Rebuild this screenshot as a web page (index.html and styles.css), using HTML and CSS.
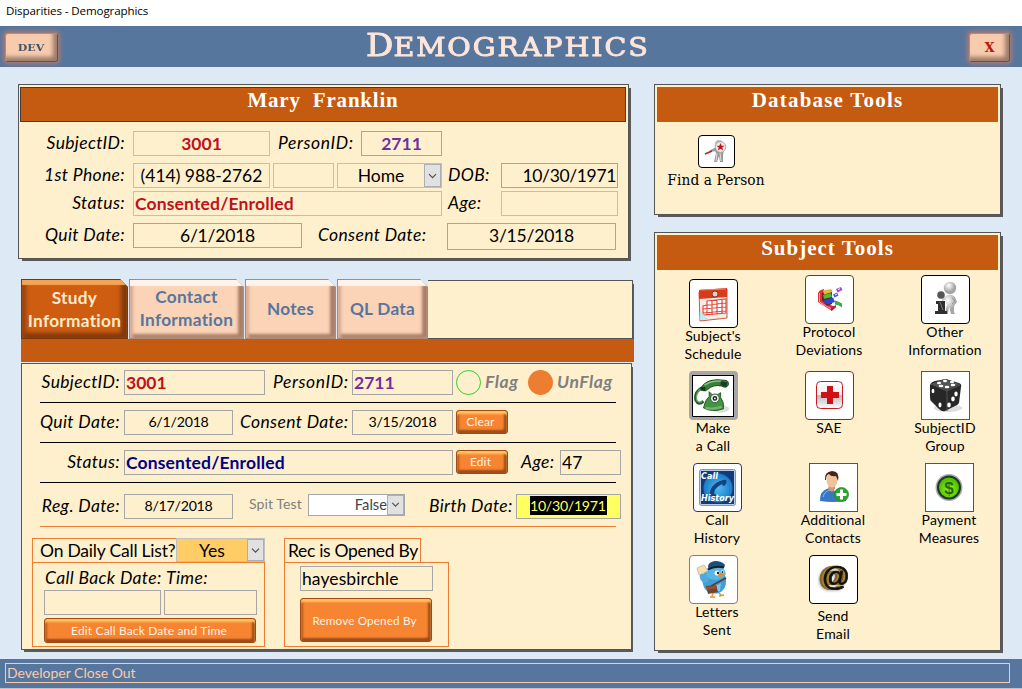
FILE: index.html
```html
<!DOCTYPE html>
<html lang="en">
<head>
<meta charset="utf-8">
<title>Disparities - Demographics</title>
<link rel="stylesheet" href="styles.css">
</head>
<body>
<div class="titlebar">Disparities - Demographics</div>
<header class="header">
  <button class="glow dev"><span>DEV</span></button>
  <h1>D<span>EMOGRAPHICS</span></h1>
  <button class="glow close">X</button>
</header>
<main class="main">
  <div class="left">
    <section class="panel person">
      <h2 class="bar outlined">Mary&nbsp; Franklin</h2>
      <div class="row r1"><label class="first">SubjectID:</label><div class="field w137 red c">3001</div><label class="pid">PersonID:</label><div class="field w81 purple c">2711</div></div>
      <div class="row r2"><label class="first">1st Phone:</label><div class="field w137 c phone">(414) 988-2762</div><div class="field w61"></div><div class="field w105 combo"><span>Home</span><i class="drop"><svg viewBox="0 0 17 22"><path d="M4.500 9.500l4 4 4-4"/></svg></i></div><label class="dob">DOB:</label><div class="field w117 right">10/30/1971</div></div>
      <div class="row r3"><label class="first">Status:</label><div class="field w309 red status">Consented/Enrolled</div><label class="dob">Age:</label><div class="field w117"></div></div>
      <div class="row r4"><label class="first">Quit Date:</label><div class="field w169 c dark">6/1/2018</div><label class="cons">Consent Date:</label><div class="field w169 c dark tall">3/15/2018</div></div>
    </section>
    <nav class="tabs">
      <div class="tab active t1">Study<br>Information</div><div class="tab t2">Contact<br>Information</div><div class="tab t3">Notes</div><div class="tab t4">QL Data</div><div class="tabfill"></div>
    </nav>
    <div class="strip"></div>
    <section class="panel study">
      <div class="line-row">
        <label class="lead">SubjectID:</label><div class="field w141 red">3001</div><label class="pid2">PersonID:</label><div class="field w101 purple">2711</div><i class="dot ring"></i><b class="flag">Flag</b><i class="dot solid"></i><b class="flag unflag">UnFlag</b>
      </div>
      <div class="line-row">
        <label class="lead">Quit Date:</label><div class="field w109 c small">6/1/2018</div><label class="cons2">Consent Date:</label><div class="field w101 c small">3/15/2018</div><button class="btn mini">Clear</button>
      </div>
      <div class="line-row">
        <label class="lead">Status:</label><div class="field w329 navy status">Consented/Enrolled</div><button class="btn mini">Edit</button><label class="age2">Age:</label><div class="field w61 age-value">47</div>
      </div>
      <div class="line-row last">
        <label class="lead">Reg. Date:</label><div class="field w109 c small">8/17/2018</div><span class="spit">Spit Test</span><div class="field select"><span>False</span><i class="drop"><svg viewBox="0 0 17 22"><path d="M4.500 8.500l4 4 4-4"/></svg></i></div><label class="birth">Birth Date:</label><div class="field birthfield"><mark>10/30/1971</mark></div>
      </div>
      <div class="groups">
        <div class="group g1">
          <div class="ghead"><span class="daily">On Daily Call List?</span><div class="yes"><span>Yes</span><i class="drop"><svg viewBox="0 0 17 22"><path d="M4.500 9.500l4 4 4-4"/></svg></i></div></div>
          <div class="gbody">
            <div class="cb"><label class="cbd">Call Back Date:</label><label class="time">Time:</label></div>
            <div class="cbf"><div class="field w117"></div><div class="field w93"></div></div>
            <button class="btn wide">Edit Call Back Date and Time</button>
          </div>
        </div>
        <div class="group g2">
          <div class="ghead"><span class="rec">Rec is Opened By</span></div>
          <div class="gbody"><div class="field w133">hayesbirchle</div><button class="btn big">Remove Opened By</button></div>
        </div>
      </div>
    </section>
  </div>
  <div class="side">
    <section class="panel db">
      <h2 class="bar">Database Tools</h2>
      <div class="find">
        <div class="icon findicon"><svg viewBox="0 0 37 33"><path d="M17 14l5-3 4 4-1 5 0 7h-3l-1-6-2 6h-3l2-9-1-2-2 1z" fill="#999"/><path d="M18 26l1-8m4 8l-1-8" stroke="#ddd"/><circle cx="21" cy="9" r="4" fill="#bbb"/><circle cx="22.500" cy="12" r="5.300" fill="#eee" stroke="#aaa"/><path d="M22.500 8l1.100 2.800h3l-2.300 1.800.8 2.900-2.600-1.700-2.600 1.700.8-2.900-2.300-1.800h3z" fill="#c4141b"/><path d="M12 16.500l6-3" stroke="#999" stroke-width="2"/><path d="M7 19l7-3" stroke="#a82b30" stroke-width="1.700"/></svg></div>
        <span>Find a Person</span>
      </div>
    </section>
    <section class="panel subject">
      <h2 class="bar">Subject Tools</h2>
      <div class="tools">
        <div class="tool down"><div class="icon black"><svg viewBox="0 0 49 49"><path d="M10 13l28-3v29l-27 3z" fill="#fbe9e5" stroke="#c75c42"/><path d="M10 11q14-1 28-2v9l-28 2z" fill="#d93a1c"/><path d="M11 11l26-1" stroke="#fa805d"/><circle cx="26" cy="15" r="3" fill="#ded6c8" stroke="#963225"/><path d="M18 22l19-2v14l-23 2v-9l4-1zm0 4l19-2m-23 6l23-2m-23 6l23-2M18 26v10m5-14v14m5-15v14m5-15v15" fill="#fff" stroke="#e14b40" stroke-width="1.200"/><path d="M11 32l8 8-8 1z" fill="#bfe8f5"/></svg></div><p>Subject's<br>Schedule</p></div>
        <div class="tool"><div class="icon green"><svg viewBox="0 0 49 49"><path d="M13 18q1-3 6-4v13l9 4 3 1-4 4-14-9z" fill="#db3438"/><path d="M14.500 18v9l12 7" fill="none" stroke="#ff9da0"/><path d="M17 25v-7l10-3v14l-5 2z" fill="#7b1520"/><path d="M18 15.500l8-1.500 1.500 3-8.500 2.500z" fill="#e6b83c"/><path d="M18 20l8-2 1 4-8 2z" fill="#43bf38"/><path d="M18 25.500l10-3 2 4.500-8 2.500z" fill="#2a45d8"/><path d="M28 19.500l4-2 1.500 3-4 2z" fill="#345bef"/><path d="M31 14l5-2 1.500 3-5 2.500z" fill="#a74bcd"/><path d="M33 14.500l2-.8M30 20l2-1" stroke="#fff"/><path d="M30 25.500l3 1 4 2v4l-3-2-4-1z" fill="#37ac47"/><path d="M26 33l5-3v2l-5 4z" fill="#9d2446"/></svg></div><p>Protocol<br>Deviations</p></div>
        <div class="tool"><div class="icon black"><svg viewBox="0 0 49 49"><defs><radialGradient id="gg" cx=".4" cy=".3"><stop stop-color="#fff"/><stop offset="1" stop-color="#a5a5a5"/></radialGradient></defs><path d="M25 21q5-3 9 1l2 5-3 4v6l1 2h-4l-2-8-1 8h-3l2-10-2-4-3 1v-2z" fill="url(#gg)"/><path d="M31 23l3 3-3 3" fill="none" stroke="#999"/><circle cx="29" cy="13" r="6.200" fill="url(#gg)"/><circle cx="20" cy="20" r="3.800" fill="#555"/><path d="M15 26h9v10h2v3H14v-3h3v-7h-2z" fill="#303030"/><path d="M19 27l3 8" stroke="#777"/></svg></div><p>Other<br>Information</p></div>
        <div class="tool"><div class="icon call"><svg viewBox="0 0 42 41"><ellipse cx="29" cy="34" rx="9" ry="4" fill="#ddd"/><path d="M9 12Q1 17 3 25q3 6 8 1" fill="none" stroke="#245f2b" stroke-width="3"/><path d="M9 12Q2 17 4 25q3 4 6 0" fill="none" stroke="#68b060" stroke-width="1.200"/><path d="M8 12Q15 1 33 4q5 0 4 5-2 4-7 1-9-2-15 4-4 3-7-2z" fill="#34823b" stroke="#173c1c"/><path d="M12 9q8-5 18-4" fill="none" stroke="#83c473" stroke-width="1.500"/><path d="M17 16v5q-4 3-6 12 9 5 21 1 1-7-3-12v-5l-3 2h-6z" fill="#429343" stroke="#25552a"/><path d="M13 33q8 2 17-1" fill="none" stroke="#75b762" stroke-width="2.500"/><circle cx="23" cy="23" r="4.600" fill="#eee" stroke="#285b2e"/><circle cx="23" cy="23" r="1.700" fill="#fff" stroke="#222" stroke-width="1.500"/><path d="M29 5l7 1-1 5-6-2zM8 11l5 0 0 4-5 0z" fill="#1b3a20"/></svg></div><p>Make<br>a Call</p></div>
        <div class="tool"><div class="icon redline"><svg viewBox="0 0 49 49"><defs><linearGradient id="sg" x2="0" y2="1"><stop stop-color="#fff"/><stop offset=".5" stop-color="#eee"/><stop offset=".52" stop-color="#bbb"/><stop offset="1" stop-color="#fff"/></linearGradient></defs><rect x="11.500" y="10.500" width="26" height="27" rx="4" fill="url(#sg)" stroke="#c11d22"/><path d="M22 15h6v6h6v6h-6v6h-6v-6h-6v-6h6z" fill="#cf1115"/></svg></div><p>SAE</p></div>
        <div class="tool"><div class="icon square"><svg viewBox="0 0 49 49"><ellipse cx="27" cy="37" rx="14" ry="4" fill="#ddd"/><path d="M9 14q1-3 5-4l11-2 13 4q3 1 2 4l-2 16q-1 2-4 3l-10 5q-3 1-6-2l-8-8q-1-1-1-4z" fill="#272727"/><path d="M10 13l14-5 15 5-13 6z" fill="#555"/><path d="M26 20v20M26 20l13-6M26 20l-16-7" stroke="#555"/><g fill="#fff"><ellipse cx="18" cy="12" rx="2" ry="1.200"/><ellipse cx="24" cy="10" rx="2" ry="1.200"/><ellipse cx="31" cy="11" rx="2" ry="1.200"/><ellipse cx="20" cy="15" rx="2.300" ry="1.200"/><ellipse cx="26" cy="16" rx="2.300" ry="1.200"/><ellipse cx="32" cy="14" rx="2.300" ry="1.200"/><ellipse cx="12" cy="20" rx="1.400" ry="2.300"/><ellipse cx="19" cy="34" rx="1.500" ry="2.400"/><ellipse cx="35" cy="23" rx="1.700" ry="2.400"/><ellipse cx="32" cy="28" rx="1.800" ry="2.400"/><ellipse cx="28" cy="34" rx="1.800" ry="2.400"/></g></svg></div><p>SubjectID<br>Group</p></div>
        <div class="tool over"><div class="icon blue"><svg viewBox="0 0 49 49"><defs><radialGradient id="bg"><stop stop-color="#4dbdf1"/><stop offset="1" stop-color="#197ac8"/></radialGradient></defs><rect x="6.500" y="6.500" width="36" height="36" rx="2" fill="#b7cbe6" stroke="#7897c6"/><path d="M8 8h33v33H8z" fill="#123b78"/><circle cx="25" cy="25" r="14.500" fill="url(#bg)"/><path d="M17 33Q16 21 30 17q5-1 3 4-3 4-4 0-8 4-8 10 3 0 2 3-4 4-6-1z" fill="#16427d"/><text x="8" y="16" textLength="17" class="calltext">Call</text><text x="8" y="38" textLength="33" class="calltext">History</text></svg></div><p>Call<br>History</p></div>
        <div class="tool over"><div class="icon square"><svg viewBox="0 0 49 49"><path d="M11 38q-1-10 9-13l6 3 4-3q8 2 7 13-13 2-26 0z" fill="#3976c6"/><path d="M14 34q2-6 7-7" fill="none" stroke="#8abaf0"/><path d="M20 22h6v4l-3 3-4-3z" fill="#d29b71"/><ellipse cx="23" cy="17" rx="5.500" ry="7.500" fill="#f0c39c"/><path d="M16 17q-1-8 7-9 8 0 6 10l-2-5q-5 1-7-2-3 1-3 6z" fill="#4a2418"/><circle cx="32.500" cy="31.500" r="7" fill="#28a728" stroke="#1c8519" stroke-width=".7"/><path d="M32.500 26.500v10m-5-5h10" stroke="#fff" stroke-width="3"/></svg></div><p>Additional<br>Contacts</p></div>
        <div class="tool over"><div class="icon square"><svg viewBox="0 0 49 49"><defs><radialGradient id="pg" cy=".6"><stop stop-color="#a3f116"/><stop offset="1" stop-color="#53bf07"/></radialGradient></defs><circle cx="24" cy="24.500" r="13.500" fill="#aaa"/><circle cx="24" cy="24.500" r="12" fill="#173a20"/><circle cx="24" cy="24.500" r="10" fill="url(#pg)"/><text x="24" y="30.500" text-anchor="middle" class="dollar">$</text></svg></div><p>Payment<br>Measures</p></div>
        <div class="tool letters"><div class="icon gray"><svg viewBox="0 0 49 49"><path d="M19 17Q10 24 16 34q5 6 14 4 8-4 7-14-1-7-6-9z" fill="#3f9fd6"/><path d="M23 29q4 3 9-1l-1 8-7 1z" fill="#7cc7ee"/><path d="M17 22Q13 17 20 12q6-3 13 0 6 6 2 10-9 6-18 0z" fill="#58b5e6"/><path d="M17 28Q9 27 11 17l3 2 3-2q0 4 3 8z" fill="#4babdf"/><path d="M8 13l7-3 4 6-9 4z" fill="#f2dfb8" stroke="#c9b183" stroke-width=".7"/><path d="M19 12q0-5 7-6 7 0 10 4l-1 3q-7-2-15 1z" fill="#1d4f7d"/><path d="M19 14.500q7-4 16-2" fill="none" stroke="#15212d" stroke-width="2"/><circle cx="28" cy="18" r="2.500" fill="#fff"/><circle cx="33.500" cy="17" r="1.800" fill="#fff"/><circle cx="29" cy="18" r="1.200" fill="#222"/><circle cx="33.500" cy="17" r="1" fill="#222"/><path d="M29 19.500l4-2 3 2.500-5 2z" fill="#ed8b19"/><path d="M22 31l15-8" stroke="#653722" stroke-width="1.500"/><path d="M17 31l10-1 2 7-10 2z" fill="#75422a"/><path d="M17 32l11-1v2l-10 2z" fill="#935537"/><path d="M24 38l-1 3m-2 1h5m4-4l2 2m-2 1l5-1" stroke="#e1942c" stroke-width="1.500"/></svg></div><p>Letters<br>Sent</p></div>
        <div class="tool send"><div class="icon black"><svg viewBox="0 0 49 49"><text x="26.500" y="30.500" text-anchor="middle" class="at">@</text></svg></div><p>Send<br>Email</p></div>
      </div>
    </section>
  </div>
</main>
<footer class="footer"><div>Developer Close Out</div></footer>
</body>
</html>
```

FILE: styles.css
```css
* { box-sizing: border-box; }
body { margin: 0; width: 1022px; height: 689px; overflow: hidden; background: #dde9f5; color: #000; font: 17.5px/24px Lato, sans-serif; font-variant-ligatures: none; display: flex; flex-direction: column; }
h1, h2, p { margin: 0; font-weight: normal; }
button { font-family: inherit; padding: 0; flex: none; }
.titlebar { height: 26px; padding-left: 6px; background: #fff; font: 11.6px/22px "Open Sans", sans-serif; letter-spacing: -.12px; flex: none; }
.header { height: 41px; background: #57769d; display: flex; justify-content: space-between; align-items: flex-start; padding: 7px 12px 0 5px; flex: none; }
.header h1 { color: #fde5d9; font: 31px/25px "DejaVu Serif", serif; -webkit-text-stroke: .9px #fde5d9; margin-left: -12px; transform: scaleX(1.1); }
.header h1 span { font-size: 26px; letter-spacing: 1.7px; }
.glow { height: 29px; background: #f8cbad; border: 1px solid #7c4934; border-top-color: #ed7d31; border-left-color: #ed7d31; border-radius: 3px; box-shadow: 0 0 4px 2px #a87b75, inset -4px -4px 4px #9b7b68; font: bold 11px/25px "DejaVu Serif", serif; }
.dev { width: 53px; color: #44546a; font-size: 10px; }
.dev span { display: inline-block; transform: scaleX(1.1); }
.close { width: 41px; color: #ba141a; font-size: 13px; font-family: "DejaVu Serif", serif; }
.main { display: flex; gap: 25px; padding: 17px 0 0 18px; height: 592px; flex: none; }
.left { width: 611px; flex: none; }
.side { width: 347px; flex: none; }
.panel { background: #fff0cd; border: 1px solid #555; box-shadow: 3px 3px 0 -1px #5b5959; }
.bar { height: 35px; margin: 2px; background: #c55a11; color: #fff; text-align: center; font: bold 21px/26px "Liberation Serif", serif; letter-spacing: 1.2px; }
.subject .bar { letter-spacing: 1px; }
.bar.outlined { border: 1px solid #443b36; margin: 2px 2px 0 1px; line-height: 25px; letter-spacing: .8px; }
.person { height: 175px; }
.row, .line-row { display: flex; }
.row { height: 25px; }
label { font-style: italic; flex: none; white-space: nowrap; letter-spacing: .35px; line-height: 24px; }
.first { width: 113px; margin-right: 1px; padding-right: 7px; text-align: right; }
.r1 { margin-top: 9px; } .r2 { margin-top: 7px; } .r3 { margin-top: 3px; } .r4 { margin-top: 7px; }
.field { height: 25px; border: 1px solid #bfbfbf; flex: none; padding: 0 1px; line-height: 23px; white-space: nowrap; color: #000; }
.study .field, .dark, .r2 .w117, .r1 .w81 { border-color: #a6a6a6; }
.c { text-align: center; }
.right { text-align: right; letter-spacing: -.35px; }
.dark { letter-spacing: -.2px; }
.red, .purple, .navy { font-weight: bold; }
.status { letter-spacing: .15px; }
.red { color: #c0121c; } .purple { color: #7030a0; } .navy { color: #00008b; }
.w137 { width: 137px; } .w81 { width: 81px; } .w61 { width: 61px; } .w105 { width: 105px; } .w117 { width: 117px; } .w309 { width: 309px; } .w169 { width: 169px; }
.w141 { width: 141px; } .w101 { width: 101px; } .w109 { width: 109px; } .w329 { width: 329px; } .w93 { width: 93px; } .w133 { width: 133px; }
.pid { width: 91px; padding-left: 8px; letter-spacing: .6px; }
.r2 .w61 { margin: 0 3px; }
.dob { width: 59px; padding-left: 6px; }
.cons { width: 145px; padding-left: 16px; }
.tall { height: 27px; line-height: 24px; }
.combo, .select, .yes { display: flex; padding: 0; }
.combo span, .yes span { flex: 1; text-align: center; }
.drop { width: 17px; height: 100%; background: #e1e1e1; border: 1px solid #a9afb5; flex: none; display: flex; }
.drop svg { width: 100%; height: 100%; fill: none; stroke: #505050; stroke-width: 1.400; }
.tabs { margin: 20px -4px 0 3px; height: 60px; display: flex; align-items: flex-start; }
.tab { height: 60px; flex: none; display: flex; align-items: center; justify-content: center; padding-bottom: 2px; text-align: center; font-weight: bold; font-size: 17.2px; letter-spacing: .3px; line-height: 23px; color: #57769d; background: #fbd3b6; border: 1px solid #ad8872; clip-path: polygon(0 0, calc(100% - 8px) 0, 100% 8px, 100% 100%, 0 100%); box-shadow: inset 0 6px 1px #fff4e9, inset 3px 0 3px #d8a88c, inset -5px -4px 3px #a87e68; margin-right: 1px; }
.active { background: #ce5d12; color: #fdebc8; border-color: #7b360c; box-shadow: inset 0 5px 1px #f6a452, inset 4px 0 4px #94420d, inset -6px -5px 4px #7f390d; }
.t1 { width: 107px; padding: 0; } .t2 { width: 115px; } .t3 { width: 91px; } .t4 { width: 91px; margin: 0; }
.tabfill { flex: 1; height: 59px; margin-top: 1px; background: #fff0cd; border: 1px solid #555; border-left: 0; box-shadow: 2px 3px 0 -1px #5b5959; }
.strip { height: 23px; margin: 0 -5px 1px 3px; background: #c55a11; position: relative; }
.study { height: 287px; margin: 0 -3px 0 3px; padding: 6px 0 0 18px; box-shadow: 2px 3px 0 -1px #5b5959; }
.line-row { height: 40px; position: relative; }
.line-row::after { content: ""; position: absolute; left: 0; bottom: 7px; width: 576px; height: 1px; background: #000; }
.lead { width: 84px; padding-right: 4px; text-align: right; }
.pid2 { width: 87px; padding-left: 8px; letter-spacing: .6px; }
.cons2 { width: 119px; padding-left: 7px; }
.dot { width: 25px; height: 25px; border-radius: 50%; margin-left: 3px; flex: none; }
.ring { border: 1px solid #32cd32; } .solid { background: #ed7d31; margin-left: 10px; }
.flag { width: 37px; padding-left: 4px; color: #7f7f7f; font-style: italic; font-size: 17.5px; letter-spacing: .6px; flex: none; }
.unflag { width: 65px; padding-left: 4px; }
.small { font-size: 14.2px; line-height: 21px; letter-spacing: -.25px; }
.btn { border: 1px solid #a34b14; border-radius: 3px; color: #fff2e6; background: #f68431; box-shadow: inset 0 3px 2px #ffc15f, inset 2px 0 2px #ad5217, inset -3px -3px 2px #9c4b1a; font-size: 12px; letter-spacing: .15px; }
.mini { width: 52px; height: 24px; margin-left: 3px; padding-right: 3px; line-height: 20px; }
.age2 { width: 52px; padding-left: 13px; }
.last { height: 37px; margin-top: 4px; }
.last::after { background: #ed7d31; bottom: 4px; }
.spit { color: #7f7f7f; font-size: 14px; letter-spacing: .1px; line-height: 19px; padding-left: 16px; width: 75px; flex: none; }
.select { width: 97px; height: 22px; background: #fff; font-size: 14.7px; line-height: 19px; }
.select span { flex: 1; text-align: right; color: #444; }
.birth { width: 111px; padding-left: 24px; }
.birthfield { width: 105px; background: #ffff5f; font-size: 14.2px; letter-spacing: -.3px; padding: 0 13px; }
mark { display: block; width: 77px; height: 19px; line-height: 19px; margin-top: 1px; background: #000; color: #ffff66; }
.groups { display: flex; margin: 7px 0 0 -8px; }
.g1 { width: 233px; margin-right: 19px; } .g2 { width: 165px; }
.ghead { height: 24px; border: 1px solid #ed7d31; border-bottom: 0; display: flex; }
.g2 .ghead { width: 137px; }
.gbody { height: 85px; border: 1px solid #ed7d31; padding: 4px 11px; }
.daily { width: 143px; padding-left: 7px; line-height: 24px; letter-spacing: -.2px; flex: none; white-space: nowrap; }
.rec { padding-left: 3px; line-height: 24px; letter-spacing: -.32px; white-space: nowrap; }
.yes { flex: 1; margin: -1px -1px 0 0; height: 24px; background: #ffcc66; border: 1px solid #bfbfbf; line-height: 24px; }
.cb { display: flex; height: 23px; } .cb label { line-height: 22px; } .cbd { width: 122px; padding-left: 1px; }
.cbf { display: flex; gap: 3px; }
.wide { width: 212px; height: 25px; margin-top: 3px; padding-right: 2px; display: block; line-height: 20px; }
.g2 .gbody { padding: 3px 15px; }
.g2 .field { letter-spacing: .1px; }
.big { width: 132px; height: 44px; margin-top: 7px; padding-right: 3px; display: block; font-size: 11.7px; line-height: 40px; letter-spacing: .15px; }
.db { height: 131px; margin-bottom: 17px; }
.find { margin-top: 13px; padding-left: 8px; width: 114px; display: flex; flex-direction: column; align-items: center; font: 15.3px/25px "DejaVu Serif Condensed", "DejaVu Serif", serif; letter-spacing: .1px; white-space: nowrap; }
.subject { height: 419px; }
.icon { width: 49px; height: 49px; background: #fff; border: 1px solid #000; border-radius: 4px; overflow: hidden; flex: none; }
.icon svg { display: block; width: 49px; height: 49px; margin: -1px; }
.findicon { width: 37px; height: 33px; }
.findicon svg { width: 37px; height: 33px; }
.green { border-color: #385723; } .redline { border-color: #c0121c; } .blue { border-color: #2e3191; } .gray { border-color: #7f7f7f; }
.square { border-color: #555; border-radius: 0; }
.icon.call { border: 3px solid #a6a6a6; background: #a6a6a6; }
.icon.call svg { width: 42px; height: 42px; margin: 1px 0 0 0; border: 1px solid #000; background: #fff; }
.tools { display: grid; grid-template-columns: repeat(3, 116px); grid-template-rows: 96px 92px 92px 92px; margin-top: 5px; }
.tool { display: flex; flex-direction: column; align-items: center; font-size: 14px; line-height: 18px; text-align: center; }
.tool p { margin-top: -1px; letter-spacing: .15px; }
.down { padding-top: 4px; }
.over, .send { padding-left: 8px; }
.letters p { padding-left: 8px; }
.send p { margin-top: 3px; }
.calltext { font: italic bold 8px "DejaVu Sans", sans-serif; fill: #fff; }
.dollar { font: bold 17px "Liberation Sans", sans-serif; fill: #176c12; }
.at { font: italic 28px "Liberation Sans", sans-serif; fill: #111; stroke: #111; stroke-width: .7; filter: drop-shadow(-1.5px .3px 0 #a58335) drop-shadow(-2px .6px 0 #806020) drop-shadow(-1px 1px 1px #bbb); }
.footer { height: 30px; background: #57769d; border-bottom: 1px solid #b7c3cf; box-shadow: inset 0 -1px #2584d8; padding: 4px 0 0 5px; flex: none; }
.footer div { width: 1005px; height: 20px; border: 1px solid #f8cbad; color: #f8cbad; padding-left: 1px; font-size: 14px; line-height: 18px; }
```
